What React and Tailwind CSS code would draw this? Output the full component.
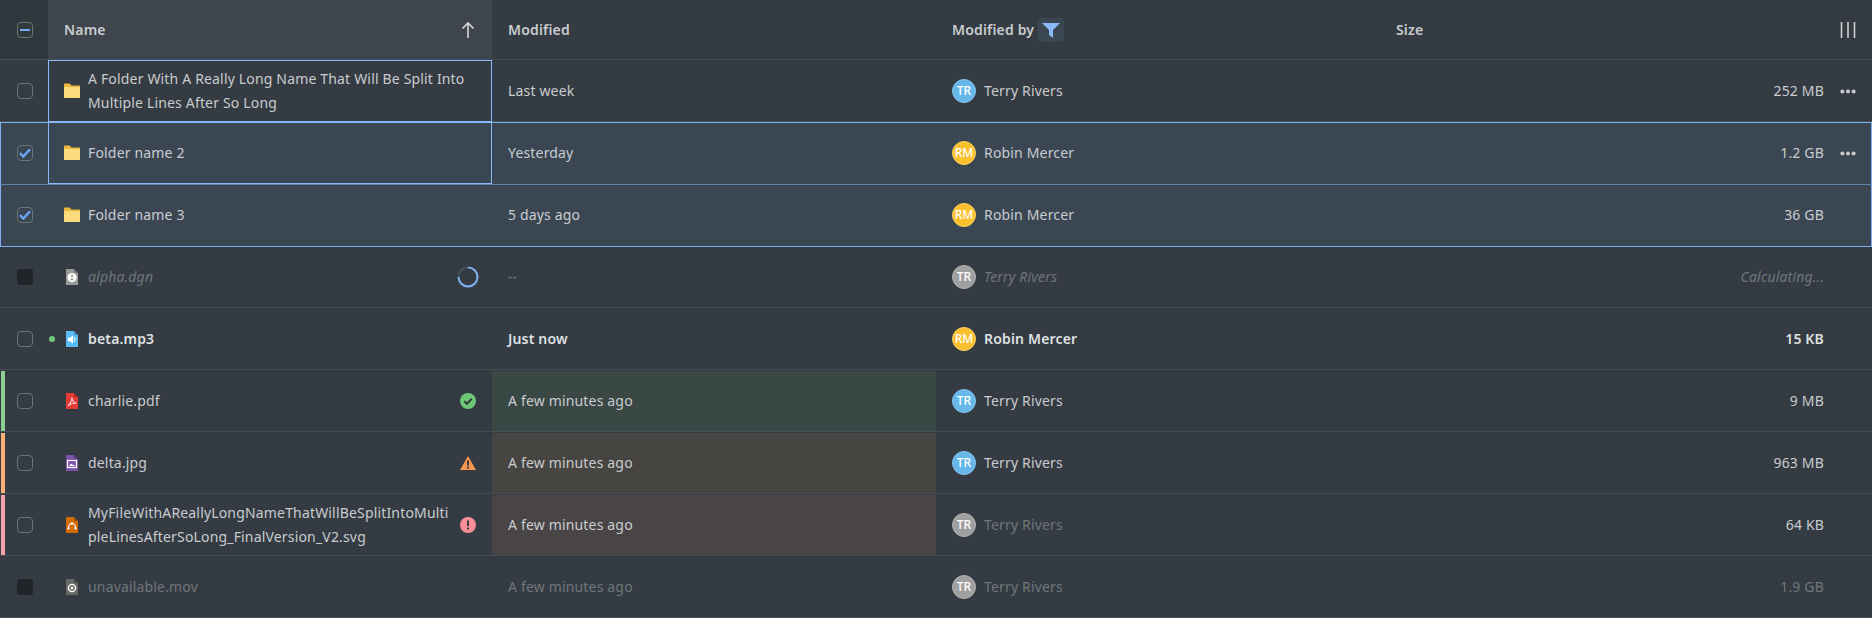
import React from 'react';

const gridCols = 'grid grid-cols-[48px_444px_444px_444px_1fr]';

const Checkbox = ({ state }) => {
  if (state === 'disabled') {
    return <div className="w-4 h-4 rounded-[3px] bg-[#1f2529]" />;
  }
  return (
    <div className="w-4 h-4 rounded-[4px] border border-[#6c7478] flex items-center justify-center">
      {state === 'checked' && (
        <svg width="12" height="12" viewBox="0 0 12 12" fill="none">
          <path d="M1 6.2 L4.3 9.5 L11 2.2" stroke="#6aa8f5" strokeWidth="2.4" />
        </svg>
      )}
      {state === 'mixed' && <div className="w-2.5 h-0.5 bg-[#76aef5]" />}
    </div>
  );
};

const FolderIcon = () => (
  <svg width="16" height="16" viewBox="0 0 16 16" className="shrink-0">
    <path d="M0 1.5 C0 1 .3 .5 1 .5 H5.5 L7.5 2.5 H16 V6 H0 Z" fill="#eab83c" />
    <path d="M0 4 H16 V14 C16 14.6 15.6 15 15 15 H1 C.4 15 0 14.6 0 14 Z" fill="#fbdc7c" />
  </svg>
);

// base sheet with a folded corner, the glyph goes on top of it
const FileIcon = ({ color, children }) => (
  <svg width="12" height="16" viewBox="0 0 12 16" className="shrink-0">
    <path d="M0 0 H8 L12 4 V16 H0 Z" fill={color} />
    <path d="M8 0 L12 4 H8 Z" fill="#000" fillOpacity="0.25" />
    {children}
  </svg>
);

const DgnIcon = () => (
  <FileIcon color="#9b9b9b">
    <circle cx="6" cy="8.5" r="4.6" fill="#fff" />
    <path d="M6 5.5 V8.5 M4.5 10.5 H7.5" stroke="#9b9b9b" strokeWidth="1.6" />
  </FileIcon>
);

const AudioIcon = () => (
  <FileIcon color="#5cbcf6">
    <path d="M2 6.8 H4 L7 4.5 V12.5 L4 10.2 H2 Z" fill="#fff" />
    <path d="M8.3 6.2 Q10 8.5 8.3 10.8" stroke="#fff" strokeWidth="1" fill="none" />
  </FileIcon>
);

const PdfIcon = () => (
  <FileIcon color="#e53935">
    <path d="M2 12.8 Q5.5 9.8 6 4.5 Q6.5 9.8 10.5 10.3 Q5.5 9.8 2 12.8 Z" fill="none" stroke="#fbd5d5" strokeWidth="1.1" />
  </FileIcon>
);

const ImageIcon = () => (
  <FileIcon color="#7a52aa">
    <rect x="1.5" y="5.5" width="9" height="7" fill="#7a52aa" stroke="#fff" strokeWidth="1.2" />
    <path d="M3 11 L5 8.5 L6.5 10 L7.5 9.5 L9 11 Z" fill="#fff" />
  </FileIcon>
);

const VectorIcon = () => (
  <FileIcon color="#d36b00">
    <path d="M2.5 11.5 Q2.5 6.5 6 6.5 Q9.5 6.5 9.5 11.5" fill="none" stroke="#fff" strokeWidth="1.1" />
    <path d="M1.5 10.5 H3.5 V12.5 H1.5 Z M8.5 10.5 H10.5 V12.5 H8.5 Z M5 5.5 H7 V7.5 H5 Z" fill="#fff" />
  </FileIcon>
);

const VideoIcon = () => (
  <FileIcon color="#6a6a6a">
    <circle cx="6" cy="9" r="3.6" fill="none" stroke="#fff" strokeWidth="1.3" />
    <circle cx="6" cy="9" r="1.5" fill="#fff" />
  </FileIcon>
);

const Spinner = () => (
  <svg width="22" height="22" viewBox="0 0 22 22" className="shrink-0">
    <circle cx="11" cy="11" r="9.5" fill="none" stroke="#465158" strokeWidth="2" />
    <path d="M11 1.5 A9.5 9.5 0 1 1 1.5 11" fill="none" stroke="#7fb0f0" strokeWidth="2" />
  </svg>
);

const SuccessIcon = () => (
  <svg width="16" height="16" viewBox="0 0 16 16" className="shrink-0">
    <circle cx="8" cy="8" r="8" fill="#6fc876" />
    <path d="M4.2 8.3 L7 10.8 L11.8 5.6" fill="none" stroke="#343b42" strokeWidth="2" />
  </svg>
);

const WarningIcon = () => (
  <svg width="16" height="16" viewBox="0 0 16 16" className="shrink-0">
    <path d="M8 1 L16 15 H0 Z" fill="#f8964d" />
    <path d="M8 5.5 V10.5 M8 11.5 V13.5" stroke="#343b42" strokeWidth="2" />
  </svg>
);

const ErrorIcon = () => (
  <svg width="16" height="16" viewBox="0 0 16 16" className="shrink-0">
    <circle cx="8" cy="8" r="8" fill="#f78f96" />
    <path d="M8 3.5 V9 M8 10.5 V12.5" stroke="#343b42" strokeWidth="2" />
  </svg>
);

const Avatar = ({ initials, tone }) => {
  const tones = {
    blue: 'bg-[#66b7ea] border-[#85c5ee]',
    yellow: 'bg-[#fbc02d] border-[#fcd060]',
    gray: 'bg-[#a0a0a0] border-[#b0b0b0]',
  };
  return (
    <div className={`w-6 h-6 rounded-full border flex items-center justify-center text-xs font-medium not-italic tracking-normal text-white shrink-0 ${tones[tone]}`}>
      {initials}
    </div>
  );
};

const Dots = () => (
  <svg width="16" height="5" viewBox="0 0 16 5">
    <circle cx="2.4" cy="2.5" r="2" fill="#c9cccf" />
    <circle cx="8" cy="2.5" r="2" fill="#c9cccf" />
    <circle cx="13.6" cy="2.5" r="2" fill="#c9cccf" />
  </svg>
);

const rows = [
  {
    name: 'A Folder With A Really Long Name That Will Be Split Into Multiple Lines After So Long',
    icon: <FolderIcon />, modified: 'Last week', by: 'Terry Rivers', initials: 'TR', tone: 'blue',
    size: '252 MB', check: 'empty', nameOutline: true, dots: true, wrap: 'break-words',
  },
  {
    name: 'Folder name 2', icon: <FolderIcon />, modified: 'Yesterday', by: 'Robin Mercer', initials: 'RM', tone: 'yellow',
    size: '1.2 GB', check: 'checked', selected: 'first', nameOutline: true, dots: true,
  },
  {
    name: 'Folder name 3', icon: <FolderIcon />, modified: '5 days ago', by: 'Robin Mercer', initials: 'RM', tone: 'yellow',
    size: '36 GB', check: 'checked', selected: 'last',
  },
  {
    name: 'alpha.dgn', icon: <DgnIcon />, modified: '--', by: 'Terry Rivers', initials: 'TR', tone: 'gray',
    size: 'Calculating...', check: 'disabled', variant: 'pending', status: <Spinner />,
  },
  {
    name: 'beta.mp3', icon: <AudioIcon />, modified: 'Just now', by: 'Robin Mercer', initials: 'RM', tone: 'yellow',
    size: '15 KB', check: 'empty', variant: 'unread',
  },
  {
    name: 'charlie.pdf', icon: <PdfIcon />, modified: 'A few minutes ago', by: 'Terry Rivers', initials: 'TR', tone: 'blue',
    size: '9 MB', check: 'empty', status: <SuccessIcon />, accent: 'bg-[#8ccf8f]', tint: 'bg-[#394745]',
  },
  {
    name: 'delta.jpg', icon: <ImageIcon />, modified: 'A few minutes ago', by: 'Terry Rivers', initials: 'TR', tone: 'blue',
    size: '963 MB', check: 'empty', status: <WarningIcon />, accent: 'bg-[#ffb074]', tint: 'bg-[#474541]',
  },
  {
    name: 'MyFileWithAReallyLongNameThatWillBeSplitIntoMultipleLinesAfterSoLong_FinalVersion_V2.svg',
    icon: <VectorIcon />, modified: 'A few minutes ago', by: 'Terry Rivers', initials: 'TR', tone: 'gray', byDim: true,
    size: '64 KB', check: 'empty', status: <ErrorIcon />, accent: 'bg-[#f5a3a8]', tint: 'bg-[#494547]',
  },
  {
    name: 'unavailable.mov', icon: <VideoIcon />, modified: 'A few minutes ago', by: 'Terry Rivers', initials: 'TR', tone: 'gray',
    size: '1.9 GB', check: 'disabled', variant: 'disabled',
  },
];

const Row = ({ row }) => {
  const { variant } = row;
  let text = 'text-[#c9cccf]';
  if (variant === 'pending') text = 'text-[#6f767b] italic';
  if (variant === 'disabled') text = 'text-[#6f767b]';
  if (variant === 'unread') text = 'text-[#dfe1e3] font-semibold';
  const byText = row.byDim ? 'text-[#6f767b]' : text;

  return (
    <div
      className={`${gridCols} relative h-[62px] pt-px border-b ${
        row.selected ? 'bg-[#3a4753] border-[#3a4753]' : 'border-[#434d54]'
      }`}
    >
      {row.accent && <div className={`absolute left-px top-px bottom-0 w-1 ${row.accent}`} />}
      {row.selected === 'first' && (
        <div className="absolute left-0 right-0 top-0 bottom-[-1px] border-x border-t border-[#7fb0f0] pointer-events-none" />
      )}
      {row.selected === 'last' && (
        <div className="absolute left-0 right-0 top-0 bottom-[-2px] border border-[#7fb0f0] border-t-[#5f84ad] pointer-events-none" />
      )}
      <div className="flex items-center justify-center pl-0.5">
        <Checkbox state={row.check} />
      </div>
      <div className="relative flex items-center pl-4 pr-4 min-w-0">
        {row.nameOutline && (
          <div className="absolute left-0 right-0 top-[-1px] bottom-[-1px] border border-[#8ab8f8] pointer-events-none" />
        )}
        <div className="w-4 flex justify-center shrink-0 relative">
          {variant === 'unread' && <div className="absolute left-[-15px] top-[5px] w-1.5 h-1.5 rounded-full bg-[#6fc876]" />}
          {row.icon}
        </div>
        <div className={`ml-2 flex-1 min-w-0 leading-6 ${row.wrap || 'break-all'} ${text}`}>
          {row.name}
        </div>
        {row.status && <div className="ml-2 w-4 flex justify-center shrink-0">{row.status}</div>}
      </div>
      <div className={`flex items-center pl-4 ${row.tint || ''} ${text}`}>{row.modified}</div>
      <div className={`flex items-center pl-4 gap-2 ${byText}`}>
        <Avatar initials={row.initials} tone={row.tone} />
        {row.by}
      </div>
      <div className={`flex items-center justify-end pr-12 relative ${text}`}>
        {row.size}
        {row.dots && (
          <div className="absolute right-4 top-0 bottom-0 flex items-center">
            <Dots />
          </div>
        )}
      </div>
    </div>
  );
};

export default function App() {
  return (
    <div className="h-[618px] overflow-hidden bg-[#343b42] text-sm tracking-[0.17px] font-['Noto_Sans',sans-serif]">
      <div className={`${gridCols} h-[60px] border-b border-[#434d54] font-semibold text-[#c9cccf]`}>
        <div className="bg-[#30373d] flex items-center justify-center pl-0.5 pt-px">
          <Checkbox state="mixed" />
        </div>
        <div className="bg-[#3e454c] flex items-center justify-between pl-4 pr-4 pt-px">
          Name
          <svg width="16" height="18" viewBox="0 0 16 18" fill="none">
            <path d="M8 17 V2 M2.5 7.5 L8 2 L13.5 7.5" stroke="#d5d7d9" strokeWidth="1.6" />
          </svg>
        </div>
        <div className="flex items-center pl-4 pt-px">Modified</div>
        <div className="flex items-center pl-4 gap-1 pt-px">
          Modified by
          <div className="w-[26px] h-6 rounded bg-[#3a4753] flex items-center justify-center">
            <svg width="18" height="16" viewBox="0 0 18 16">
              <path d="M0 1 H18 L11 8 V16 L7 13 V8 Z" fill="#8ab8f8" />
            </svg>
          </div>
        </div>
        <div className="flex items-center justify-between pl-4 pr-4 pt-px">
          Size
          <svg width="16" height="16" viewBox="0 0 16 16" fill="none">
            <path d="M1.5 0 V16 M8 0 V16 M14.5 0 V16" stroke="#d5d7d9" strokeWidth="1.5" />
          </svg>
        </div>
      </div>
      {rows.map((row) => (
        <Row key={row.name} row={row} />
      ))}
    </div>
  );
}
